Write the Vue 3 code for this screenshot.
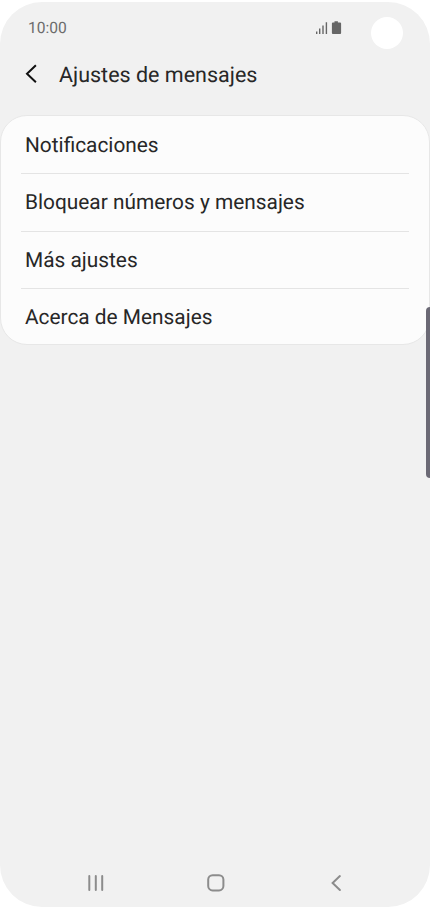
<template>
  <div class="phone">
    <header class="status-bar">
      <span class="time">10:00</span>
      <svg
        class="status-icons"
        viewBox="0 0 28 16"
      >
        <path d="M1 12.5h1.4v2.5H1zM4 9.5h1.4V15H4zM7.3 6.5h1.4V15H7.3zM10.7 3.3h1.4V15h-1.4z" />
        <path d="M19.5 2.2h3.4v1.2h2.2a1 1 0 0 1 1 1V14a1 1 0 0 1-1 1h-7.2a1 1 0 0 1-1-1V4.4a1 1 0 0 1 1-1h1.6z" />
      </svg>
      <span class="camera" />
    </header>

    <div class="title-bar">
      <svg
        class="back"
        viewBox="0 0 14 20"
      >
        <path d="M11.9 1.3 3 9.8l8.9 8.4" />
      </svg>
      <h1>Ajustes de mensajes</h1>
    </div>

    <ul class="settings">
      <li
        v-for="item in items"
        :key="item"
      >
        {{ item }}
      </li>
    </ul>

    <span class="edge-handle" />

    <nav class="nav-bar">
      <svg viewBox="0 0 20 20">
        <path d="M3.3 3v14M9.8 3v14M16.2 3v14" />
      </svg>
      <svg viewBox="0 0 20 20">
        <rect
          x="2.2"
          y="2.2"
          width="15.2"
          height="15.2"
          rx="4.4"
        />
      </svg>
      <svg viewBox="0 0 20 20">
        <path d="M13.9 3.1 6.6 10l7.3 7" />
      </svg>
    </nav>
  </div>
</template>

<script setup>
const items = [
  'Notificaciones',
  'Bloquear números y mensajes',
  'Más ajustes',
  'Acerca de Mensajes'
];
</script>

<style>
body {
  margin: 0;
  background: #fff;
}
</style>

<style scoped>
.phone {
  position: relative;
  display: flex;
  flex-direction: column;
  box-sizing: border-box;
  height: 905px;
  margin-top: 2px;
  overflow: hidden;
  border-radius: 42px;
  background: #f1f1f1;
  color: #272727;
  font-family: Roboto, sans-serif;
  text-rendering: geometricPrecision;
}

.status-bar {
  display: flex;
  align-items: center;
  height: 50px;
  padding-left: 28px;
}

.time {
  width: 287px;
  padding-top: 2px;
  color: #6c6c6c;
  font-size: 15.6px;
  line-height: 20px;
}

.status-icons {
  width: 28px;
  height: 16px;
  margin-bottom: 1px;
  fill: #666;
}

.camera {
  position: absolute;
  top: 15px;
  right: 27.5px;
  width: 32px;
  height: 32px;
  border-radius: 50%;
  background: #fff;
}

.title-bar {
  display: flex;
  align-items: center;
  height: 44px;
  padding-left: 24px;
}

.back {
  width: 14px;
  height: 20px;
  fill: none;
  stroke: #111;
  stroke-width: 2;
}

h1 {
  margin: 3px 0 0 21px;
  font-size: 21.5px;
  font-weight: 400;
  line-height: 28px;
}

.settings {
  box-sizing: border-box;
  height: 230px;
  margin: 19px 0 0;
  padding: 0 20px;
  border: 1px solid #e7e7e7;
  border-radius: 27px;
  background: #fcfcfc;
  list-style: none;
}

li {
  display: flex;
  align-items: center;
  box-sizing: border-box;
  height: 57.33px;
  padding: 2px 0 0 4px;
  font-size: 20.85px;
  line-height: 26px;
}

li:first-child {
  padding-top: 3px;
}

li + li {
  border-top: 1px solid #e4e4e4;
}

.edge-handle {
  position: absolute;
  top: 304.5px;
  right: -4px;
  width: 8px;
  height: 171px;
  border-radius: 5px;
  background: #6b6975;
}

.nav-bar {
  display: flex;
  justify-content: space-between;
  margin-top: auto;
  padding: 0 84px 14px 86px;
}

.nav-bar svg {
  width: 20px;
  height: 20px;
  fill: none;
  stroke: #8c8c8c;
  stroke-width: 2;
  stroke-linecap: round;
}
</style>
